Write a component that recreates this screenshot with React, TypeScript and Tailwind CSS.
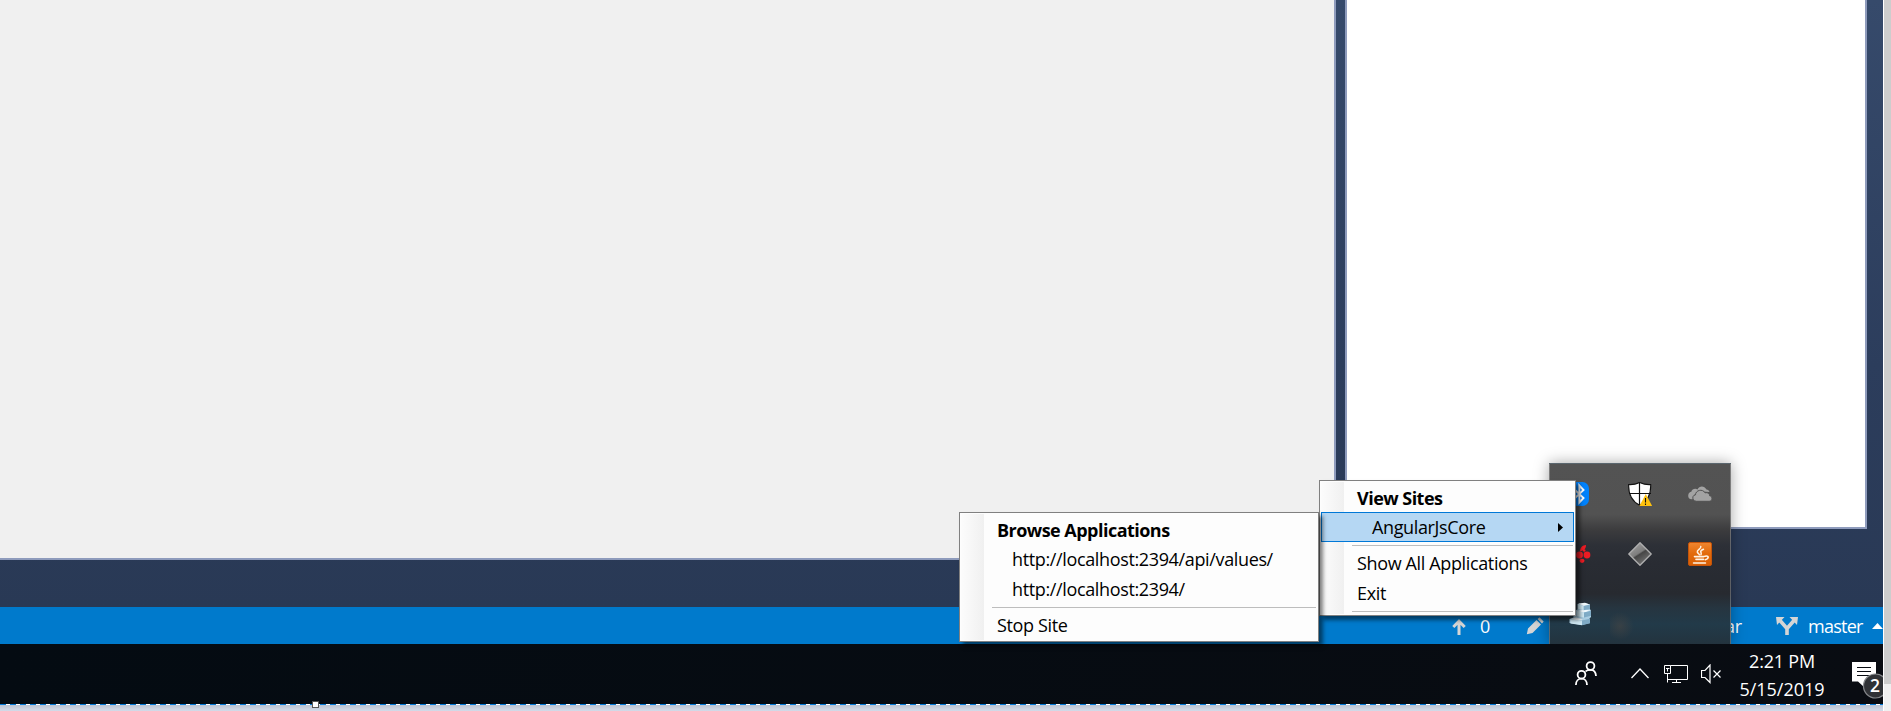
import type { ReactNode } from 'react';

const UI = "font-['Open_Sans','Noto_Sans',sans-serif]";

function Separator() {
  return <div className="mt-[3px] mb-[2px] ml-[31px] mr-[1px] h-px shrink-0 bg-[#bdbdbd]" />;
}

function Title({ children }: { children: ReactNode }) {
  return (
    <div className="flex h-[30px] shrink-0 items-center whitespace-nowrap pt-[2px] pl-[36px] text-[18px] leading-none font-bold tracking-[-0.53px]">
      {children}
    </div>
  );
}

function Row({ children, indent = false }: { children: ReactNode; indent?: boolean }) {
  return (
    <div className={`flex h-[30px] shrink-0 items-center whitespace-nowrap text-[18px] leading-none tracking-[-0.36px] ${indent ? 'pl-[51px]' : 'pl-[36px]'}`}>
      {children}
    </div>
  );
}

function Menu({ children, className }: { children: ReactNode; className: string }) {
  return (
    <div className={`absolute flex flex-col border border-[#808080] bg-[#fdfdfd] p-px text-black shadow-[4px_4px_4px_rgba(0,0,0,0.5)] ${className}`}>
      <div className="absolute top-px bottom-px left-px w-[23px] bg-linear-to-r from-[#fcfcfc] to-[#f0f0f0]" />
      <div className="relative flex flex-col">{children}</div>
    </div>
  );
}

function Bluetooth() {
  return (
    <svg width="24" height="24" viewBox="0 0 24 24">
      <rect x="3" width="18" height="24" rx="6.500" fill="#0082fc" />
      <path d="M6.500 7.500l9 8.500-4.200 4.500v-17L15.500 8l-9 8.500" fill="none" stroke="#fff" strokeWidth="1.900" />
    </svg>
  );
}

function Shield() {
  return (
    <svg width="24" height="24" viewBox="0 0 24 24">
      <path d="M.6 2.6C5 2.9 8.500 2 11.700.5c3.200 1.500 6.700 2.400 11 2.100C23 13 19.500 19.500 11.700 23.300 3.800 19.500.4 13 .6 2.600Z" fill="#fff" stroke="#111" strokeWidth="1.1" />
      <path d="M11.500 1v22M1 11.500h22" stroke="#111" strokeWidth="1.200" />
      <path d="M17.800 12L24.200 24H11.400Z" fill="#ffc20e" />
      <path d="M17.500 16v4.500M17.500 21.500v1.500" stroke="#111" strokeWidth="1.100" />
    </svg>
  );
}

function Clouds() {
  return (
    <svg width="24" height="24" viewBox="0 0 24 24">
      <path d="M5 17C2 18 0 16 .2 13.500.4 11 2 10 3.300 9.800 3.800 7 7.500 6 9.500 7.500 11 4 16 3 18.500 7.500c1.500 0 2.500 1 3 2.500L14 9.500 6 13Z" fill="#a3a3a3" />
      <path d="M8.500 19.300c-4.500 0-5-6-1-6.500 0-4.500 7-6.500 9.500-2 3-.8 4.500 1 4.700 3 3.200.5 3 5.500-.5 5.500Z" fill="#a3a3a3" stroke="#525252" strokeWidth="1" />
    </svg>
  );
}

function Berry() {
  return (
    <svg width="24" height="24" viewBox="0 0 24 24" fill="#ed1c24">
      <path d="M12 9.500C12 5.500 14.500 3.200 18 3c.2 3.500-2 5.500-6 6.500Z" />
      <circle cx="11.500" cy="13" r="3.400" />
      <circle cx="19" cy="13" r="3.400" />
      <circle cx="4" cy="13" r="3.300" />
      <ellipse cx="14" cy="18.800" rx="2.500" ry="2.100" />
      <circle cx="16.200" cy="8.500" r="1.300" />
    </svg>
  );
}

function Diamond() {
  return (
    <svg width="24" height="24" viewBox="0 0 24 24">
      <defs>
        <linearGradient id="dia" x1=".1" y1="0" x2=".75" y2="1">
          <stop offset="0" stopColor="#a5a5a5" />
          <stop offset=".48" stopColor="#7d7d7d" />
          <stop offset=".54" stopColor="#464646" />
          <stop offset="1" stopColor="#7b7b7b" />
        </linearGradient>
      </defs>
      <path d="M12 .8L23.200 12 12 23.200.8 12Z" fill="url(#dia)" stroke="#b0b0b0" strokeWidth="1.300" strokeLinejoin="round" />
    </svg>
  );
}

function Java() {
  return (
    <svg width="24" height="24" viewBox="0 0 24 24" fill="none" stroke="#fff3e4" strokeLinecap="round">
      <defs>
        <linearGradient id="jav" x1="0" y1="0" x2="0" y2="1">
          <stop offset="0" stopColor="#ef8630" />
          <stop offset=".5" stopColor="#e26a0a" />
          <stop offset="1" stopColor="#d85e04" />
        </linearGradient>
      </defs>
      <rect x=".5" y=".5" width="23" height="23" rx="1.500" fill="url(#jav)" stroke="#c4540a" />
      <path d="M12.800 4.500c.5 2.500-4 3.200-3.500 5.500.2 1 1.700 2 2.200 2.800M15.500 7.300c-2 .8-3.200 1.500-2.700 2.800.4 1 .8 1.200.2 2.700" strokeWidth="1.500" />
      <path d="M6.500 14.600h9.500M8 17.400h7.500M17 14.300c4-1.200 4.300 2.200.3 3.500" strokeWidth="1.600" />
      <path d="M5.500 20.900h12" strokeWidth="1.500" />
    </svg>
  );
}

function Servers() {
  return (
    <svg width="24" height="24" viewBox="0 0 24 24">
      <path d="M9.500 2l7.500-1 5 1.500v4.500l1 2v6l-1.500 1.500.5 4.500-8 2-12.500-2v-4l4-1.500V9l4-1.500Z" fill="#a9cde2" />
      <path d="M10 1.500l7-.8 5 2-6 1.300ZM9 9l7 1.600 7-1.800-6-1.300ZM3 17l5-1.500 7 1.700-4 1.300Z" fill="#f1f9fd" />
      <path d="M15.500 4l6.500-1.500v4.500l-6.500 1.300ZM16 10.600l7-1.800v5l-7 1.700ZM14 18.500l8-1.700v4.500l-8 2Z" fill="#7fabc6" />
      <path d="M10 2l5.500 2v4L10 6.800ZM9 9l7 1.600v4.900L9 14ZM2.500 17.500l11.500 1.300v4.500L2.500 21.500Z" fill="#cfe8f3" />
    </svg>
  );
}

function Cell({ children }: { children?: ReactNode }) {
  return <div className="flex items-center justify-center">{children}</div>;
}

function Tray() {
  return (
    <div className="absolute top-[463px] left-[1549px] grid h-[181px] w-[182px] grid-cols-3 grid-rows-3 border border-b-0 border-white/25 bg-[linear-gradient(180deg,#535353_0%,#525252_28%,#3b3b3d_37%,#2d3037_45%,#292c33_55%,#272a30_72%,#263540_80%,#223a49_89%,#23333e_100%)] shadow-[0_0_14px_rgba(0,0,0,0.35)] [clip-path:inset(-20px_-20px_0_-20px)]">
      <Cell><Bluetooth /></Cell>
      <Cell><Shield /></Cell>
      <Cell><Clouds /></Cell>
      <Cell><Berry /></Cell>
      <Cell><Diamond /></Cell>
      <Cell><Java /></Cell>
      <Cell><Servers /></Cell>
      <div className="bg-[radial-gradient(circle_at_10px_42px,rgba(90,75,65,0.4),transparent_14px)]" />
      <Cell />
    </div>
  );
}

function StatusBar() {
  return (
    <div className="flex h-[37px] shrink-0 items-center bg-[#007acc] text-[18px] leading-none tracking-[-0.3px] text-white">
      <svg className="ml-[1452px] mt-[3px] shrink-0" width="14" height="16" viewBox="0 0 14 16">
        <path d="M7 16V2M1.300 8L7 2.200 12.700 8" fill="none" stroke="#d5d5d5" strokeWidth="3" />
      </svg>
      <span className="mt-px ml-[14px] w-[10px]">0</span>
      <svg className="ml-[36px] mt-px shrink-0" width="18" height="18" viewBox="0 0 18 18" fill="#d5d5d5">
        <path d="M2 11.500L10.500 3 15 7.500 6.500 16 .8 17.200ZM11.600 2L13.500.3 17.700 4.500 16 6.400Z" />
      </svg>
      <span className="mt-px ml-[181px] w-[18px]">ar</span>
      <svg className="ml-[33px] shrink-0" width="22" height="18" viewBox="0 0 22 18">
        <path d="M11 18v-6.500L4 3.500M11 11.500l7-8" fill="none" stroke="#d5d5d5" strokeWidth="3.600" />
        <path d="M0 0h8.500L1 8ZM22 0h-8.500L21 8Z" fill="#d5d5d5" />
      </svg>
      <span className="mt-px ml-[10px] w-[53px] tracking-[-0.75px]">master</span>
      <svg className="ml-[11px] shrink-0" width="11" height="6" viewBox="0 0 11 6" fill="#fff">
        <path d="M5.500 0L11 6H0Z" />
      </svg>
    </div>
  );
}

function TaskBar() {
  return (
    <div className="flex h-[60px] shrink-0 bg-linear-to-r from-[#040b12] to-[#090c12] text-white">
      <svg className="mt-[17px] ml-[1575px] shrink-0" width="22" height="25" viewBox="0 0 22 25" fill="none" stroke="#fff" strokeWidth="1.800">
        <circle cx="15.500" cy="5" r="3.900" />
        <circle cx="6.500" cy="13.700" r="3.900" />
        <path d="M.9 24c0-4 2.500-6.300 5.600-6.300S12 20 12 24M10.500 10.500c1-1.100 3-1.700 5-1.700 3.300 0 5.300 2.500 5.500 6.200" />
      </svg>
      <svg className="mt-[23px] ml-[34px] shrink-0" width="18" height="12" viewBox="0 0 18 12" fill="none" stroke="#fff" strokeWidth="1.300">
        <path d="M.5 11L9 2l8.500 9" />
      </svg>
      <svg className="mt-[21px] ml-[15px] shrink-0" width="24" height="18" viewBox="0 0 24 18" fill="none" stroke="#fff" strokeWidth="1">
        <path d="M6.500.5h17v14H3.500M12.500 14.500v3M8 17.500h9M.5.5h6v8h-6ZM3.500 8.500v9M2 3.500h3.500M3.500 3.500v3" />
      </svg>
      <svg className="mt-[20px] ml-[13px] shrink-0" width="21" height="20" viewBox="0 0 21 20" fill="none" stroke="#fff" strokeWidth="1.200">
        <path d="M.5 6.500h3.500L9 1v17.500L4 13.500H.5ZM12.500 6.500l7 7M19.500 6.500l-7 7" />
      </svg>
      <div className="ml-[14px] flex w-[92px] shrink-0 flex-col items-center text-[18px] leading-[28px]">
        <span className="mt-[3px] tracking-[-0.2px]">2:21 PM</span>
        <span>5/15/2019</span>
      </div>
      <svg className="mt-[18px] ml-[24px] shrink-0" width="31" height="38" viewBox="0 0 31 38">
        <path d="M0 0h24v19.500H14L12 25 6 19.500H0Z" fill="#fff" />
        <path d="M5 5.500h14M5 9.500h14M5 13.500h14" stroke="#090c12" strokeWidth="1" />
        <circle cx="23.500" cy="24" r="12" fill="#303236" stroke="#85878a" strokeWidth="1.200" />
        <text x="23" y="30" textAnchor="middle" fill="#fff" fontSize="17.500" fontWeight="600" fontFamily="Open Sans">2</text>
      </svg>
    </div>
  );
}

export default function App() {
  return (
    <div className={`relative flex h-[711px] w-[1891px] overflow-hidden bg-white ${UI}`}>
      <div className="flex w-[1883px] shrink-0 flex-col overflow-hidden">
        <div className="flex h-[607px] shrink-0 items-start bg-linear-to-b from-[#364a6b] via-[#2c3d5c] via-60% to-[#293955]">
          <div className="h-[560px] w-[1336px] shrink-0 border-r-2 border-b-2 border-[#8e9bbc] bg-[#f0f0f0]" />
          <div className="ml-[9px] h-[529px] w-[522px] shrink-0 border-x-2 border-b-2 border-[#8e9bbc] bg-white" />
        </div>
        <StatusBar />
        <TaskBar />
        <div className="h-px shrink-0 bg-[repeating-linear-gradient(90deg,#0078d7_0,#0078d7_6px,#fff_6px,#fff_10px)]" />
        <div className="h-[6px] shrink-0 bg-linear-to-b from-[#b9c2d1] to-[#d3dbe9]" />
      </div>
      <div className="ml-px flex w-[7px] shrink-0 flex-col bg-[#f0f0f0]">
        <div className="h-[684px] bg-[#cdcdcd]" />
      </div>
      <div className="absolute top-[702px] left-[313px] h-[5px] w-[5px] bg-white outline outline-[#555]" />

      <Tray />

      <Menu className="top-[480px] left-[1319px] h-[136px] w-[257px]">
        <Title>View Sites</Title>
        <div className="flex h-[30px] shrink-0 items-center justify-between border border-[#0078d7] bg-[#b5d7f3] pr-[10px] pl-[50px] text-[18px] leading-none tracking-[-0.36px]">
          <span>AngularJsCore</span>
          <svg width="5" height="9" viewBox="0 0 5 9"><path d="M0 0l5 4.500L0 9Z" /></svg>
        </div>
        <Separator />
        <Row>Show All Applications</Row>
        <Row>Exit</Row>
        <Separator />
      </Menu>

      <Menu className="top-[512px] left-[959px] h-[130px] w-[360px]">
        <Title>Browse Applications</Title>
        <Row indent>http://localhost:2394/api/values/</Row>
        <Row indent>http://localhost:2394/</Row>
        <Separator />
        <Row>Stop Site</Row>
      </Menu>
    </div>
  );
}
